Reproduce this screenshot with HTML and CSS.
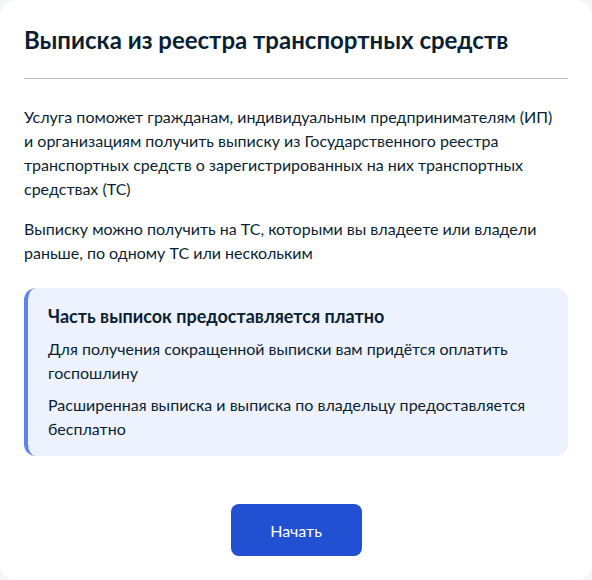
FILE: index.html
```html
<!DOCTYPE html>
<html lang="ru">
<head>
<meta charset="UTF-8" />
<meta name="viewport" content="width=device-width, initial-scale=1" />
<title>Выписка из реестра транспортных средств</title>
<link rel="stylesheet" href="styles.css">
</head>
<body>

<div class="card">
  <h1 class="title">Выписка из реестра транспортных средств</h1>
  <hr class="divider">

  <p class="text">Услуга поможет гражданам, индивидуальным предпринимателям (ИП) и организациям получить выписку из Государственного реестра транспортных средств о зарегистрированных на них транспортных средствах (ТС)</p>
  <p class="text">Выписку можно получить на ТС, которыми вы владеете или владели раньше, по одному ТС или нескольким</p>

  <div class="notice">
    <h3 class="notice-title">Часть выписок предоставляется платно</h3>
    <p class="notice-text">Для получения сокращенной выписки вам придётся оплатить госпошлину</p>
    <p class="notice-text">Расширенная выписка и выписка по владельцу предоставляется бесплатно</p>
  </div>

  <div class="actions">
    <button class="btn" type="button">Начать</button>
  </div>
</div>

</body>
</html>
```

FILE: styles.css
```css
html, body {
  height: 100%;
}
body {
  margin: 0;
  background-color: #f3f5f9;
  font-family: Lato, "Noto Sans", sans-serif;
  color: #0b1f33;
}
.card {
  box-sizing: border-box;
  min-height: 100%;
  background-color: #fff;
  border-radius: 16px;
  padding: 24px 24px 24px;
}
.title {
  margin: 0;
  font-size: 24px;
  line-height: 32px;
  font-weight: 700;
}
.divider {
  border: 0;
  border-top: 1px solid #b4c1d1;
  margin: 22px 0 26px;
}
.text {
  max-width: 536px;
  margin: 0 0 16px;
  font-size: 16px;
  line-height: 24px;
}
.notice {
  margin-top: 23px;
  background-color: #edf2fe;
  border-left: 4px solid #5a84f1;
  border-radius: 12px;
  padding: 16px 20px 15px 20px;
}
.notice-title {
  margin: 0 0 9px;
  font-size: 18px;
  line-height: 24px;
  font-weight: 700;
}
.notice-text {
  margin: 0 0 8px;
  font-size: 16px;
  line-height: 24px;
}
.notice-text:last-child {
  margin-bottom: 0;
}
.actions {
  display: flex;
  justify-content: center;
  margin-top: 48px;
}
.btn {
  width: 131px;
  height: 52px;
  border: 0;
  border-radius: 8px;
  background-color: #2250d2;
  color: #fff;
  font-family: Lato, "Noto Sans", sans-serif;
  font-size: 16px;
  cursor: pointer;
}
```
